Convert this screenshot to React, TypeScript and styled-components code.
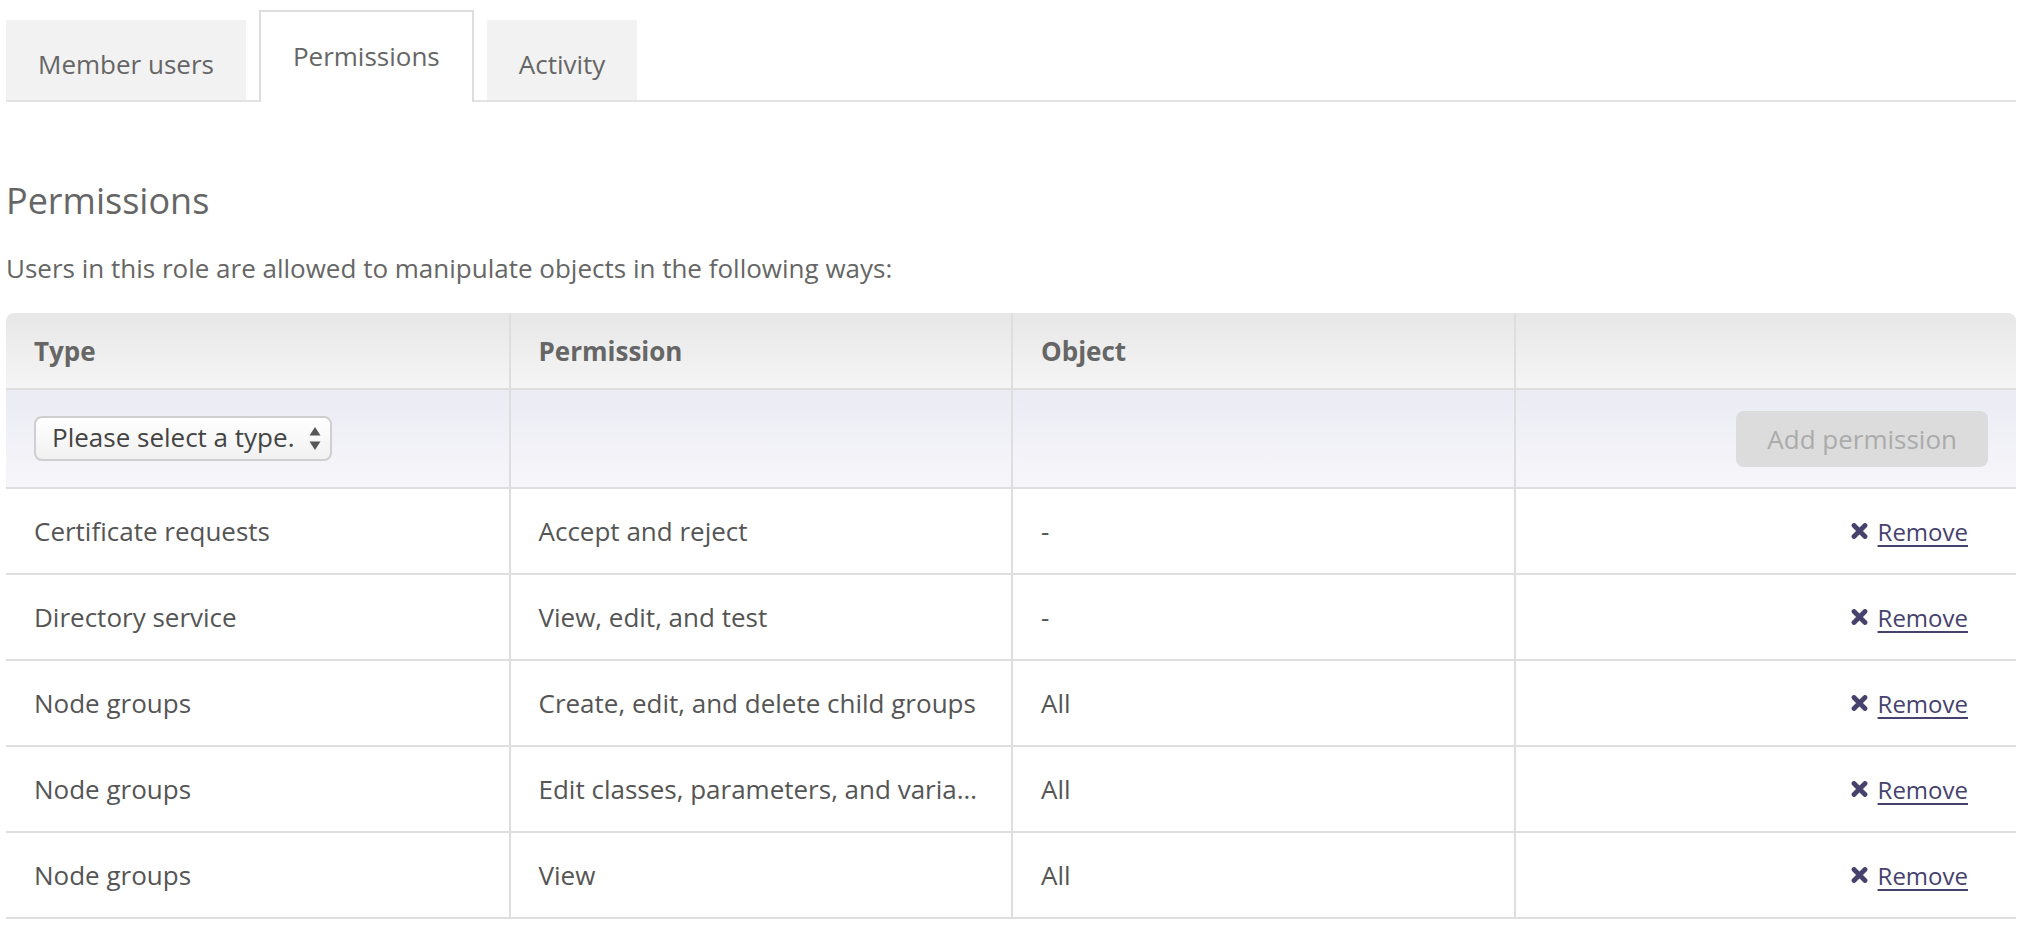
import React from "react";
import styled, { createGlobalStyle } from "styled-components";

const GlobalStyle = createGlobalStyle`
  html, body {
    margin: 0;
    padding: 0;
    background: #ffffff;
  }
  body {
    font-family: "Open Sans", "Noto Sans", sans-serif;
    color: #555555;
    -webkit-font-smoothing: antialiased;
  }
  * { box-sizing: border-box; }
`;

const Page = styled.div`
  padding: 10px 10px 0 6px;
`;

const TabBar = styled.nav`
  display: flex;
  align-items: flex-end;
  gap: 13px;
  height: 92px;
  border-bottom: 2px solid #e3e3e3;
`;

const Tab = styled.button<{ $active?: boolean }>`
  font-family: inherit;
  font-size: 26px;
  color: #666666;
  display: flex;
  align-items: center;
  padding: ${(p) => (p.$active ? "0 32px 3px" : "6px 30px 0")};
  height: ${(p) => (p.$active ? "92px" : "80px")};
  margin-bottom: ${(p) => (p.$active ? "-2px" : "0")};
  background: ${(p) => (p.$active ? "#ffffff" : "#f2f2f2")};
  border: 2px solid ${(p) => (p.$active ? "#dddddd" : "transparent")};
  border-bottom: none;
  border-radius: 0;
  cursor: pointer;
`;

const Heading = styled.h2`
  margin: 74px 0 0;
  font-size: 36px;
  line-height: 49px;
  font-weight: 400;
  color: #666666;
`;

const Lead = styled.p`
  margin: 26px 0 0;
  font-size: 26px;
  line-height: 35px;
  color: #666666;
`;

const Table = styled.div`
  margin-top: 27px;
  display: flex;
  flex-direction: column;
`;

const Row = styled.div<{ $kind: "head" | "add" | "body" }>`
  display: grid;
  grid-template-columns: repeat(4, 1fr);
  height: ${(p) => (p.$kind === "head" ? "77px" : p.$kind === "add" ? "99px" : "86px")};
  border-bottom: 2px solid #dedede;
  background: ${(p) =>
    p.$kind === "head"
      ? "linear-gradient(#e7e7e7, #f5f5f5)"
      : p.$kind === "add"
      ? "linear-gradient(#ebebf4, #f6f6fa)"
      : "#ffffff"};
  border-radius: ${(p) => (p.$kind === "head" ? "8px 8px 0 0" : "0")};
`;

const Cell = styled.div<{ $head?: boolean; $align?: "end" }>`
  display: flex;
  align-items: center;
  justify-content: ${(p) => (p.$align === "end" ? "flex-end" : "flex-start")};
  min-width: 0;
  padding: 0 28px;
  font-size: 26px;
  font-weight: ${(p) => (p.$head ? 700 : 400)};
  color: ${(p) => (p.$head ? "#666666" : "#555555")};
  & + & {
    border-left: 2px solid #dedede;
  }
`;

const Truncate = styled.span`
  display: block;
  white-space: nowrap;
  min-width: 0;
`;

const SelectWrap = styled.div`
  position: relative;
  width: 298px;
  height: 45px;
`;

const TypeSelect = styled.select`
  appearance: none;
  -webkit-appearance: none;
  width: 100%;
  height: 100%;
  padding: 0 36px 3px 16px;
  font-family: inherit;
  font-size: 26px;
  color: #444444;
  border: 2px solid #cfcfcf;
  border-radius: 8px;
  background: linear-gradient(#ffffff, #f1f1f1);
  outline: none;
`;

const SelectArrows = styled.svg`
  position: absolute;
  right: 10px;
  top: 11px;
  pointer-events: none;
`;

const AddButton = styled.button`
  font-family: inherit;
  font-size: 26px;
  color: #ababab;
  background: #dcdcdc;
  border: none;
  border-radius: 8px;
  height: 56px;
  padding: 0 31px;
  cursor: default;
`;

const RemoveLink = styled.a`
  display: inline-flex;
  align-items: center;
  gap: 10px;
  margin-right: 20px;
  font-size: 24px;
  color: #46426e;
  cursor: pointer;
  & > span {
    text-decoration: underline;
    text-decoration-thickness: 2px;
    text-underline-offset: 4px;
  }
`;

const RemoveIcon = () => (
  <svg width="17" height="16" viewBox="0 0 17 16" aria-hidden="true">
    <path
      d="M3 2.5 L14 13.5 M14 2.5 L3 13.5"
      stroke="#46426e"
      strokeWidth="4.8"
      strokeLinecap="round"
      fill="none"
    />
  </svg>
);

const rows = [
  { type: "Certificate requests", perm: "Accept and reject", obj: "-" },
  { type: "Directory service", perm: "View, edit, and test", obj: "-" },
  { type: "Node groups", perm: "Create, edit, and delete child groups", obj: "All" },
  { type: "Node groups", perm: "Edit classes, parameters, and varia…", obj: "All" },
  { type: "Node groups", perm: "View", obj: "All" },
];

export default function App() {
  return (
    <>
      <GlobalStyle />
      <Page>
        <TabBar>
          <Tab>Member users</Tab>
          <Tab $active>Permissions</Tab>
          <Tab>Activity</Tab>
        </TabBar>

        <Heading>Permissions</Heading>
        <Lead>Users in this role are allowed to manipulate objects in the following ways:</Lead>

        <Table>
          <Row $kind="head">
            <Cell $head>Type</Cell>
            <Cell $head>Permission</Cell>
            <Cell $head>Object</Cell>
            <Cell $head />
          </Row>
          <Row $kind="add">
            <Cell>
              <SelectWrap>
                <TypeSelect defaultValue="">
                  <option value="">Please select a type.</option>
                </TypeSelect>
                <SelectArrows width="14" height="23" viewBox="0 0 14 23">
                  <path d="M7 0 L12.5 8.5 L1.5 8.5 Z" fill="#555" />
                  <path d="M7 23 L12.5 14.5 L1.5 14.5 Z" fill="#555" />
                </SelectArrows>
              </SelectWrap>
            </Cell>
            <Cell />
            <Cell />
            <Cell $align="end">
              <AddButton disabled>Add permission</AddButton>
            </Cell>
          </Row>
          {rows.map((r, i) => (
            <Row $kind="body" key={i}>
              <Cell>{r.type}</Cell>
              <Cell>
                <Truncate>{r.perm}</Truncate>
              </Cell>
              <Cell>{r.obj}</Cell>
              <Cell $align="end">
                <RemoveLink>
                  <RemoveIcon />
                  <span>Remove</span>
                </RemoveLink>
              </Cell>
            </Row>
          ))}
        </Table>
      </Page>
    </>
  );
}
